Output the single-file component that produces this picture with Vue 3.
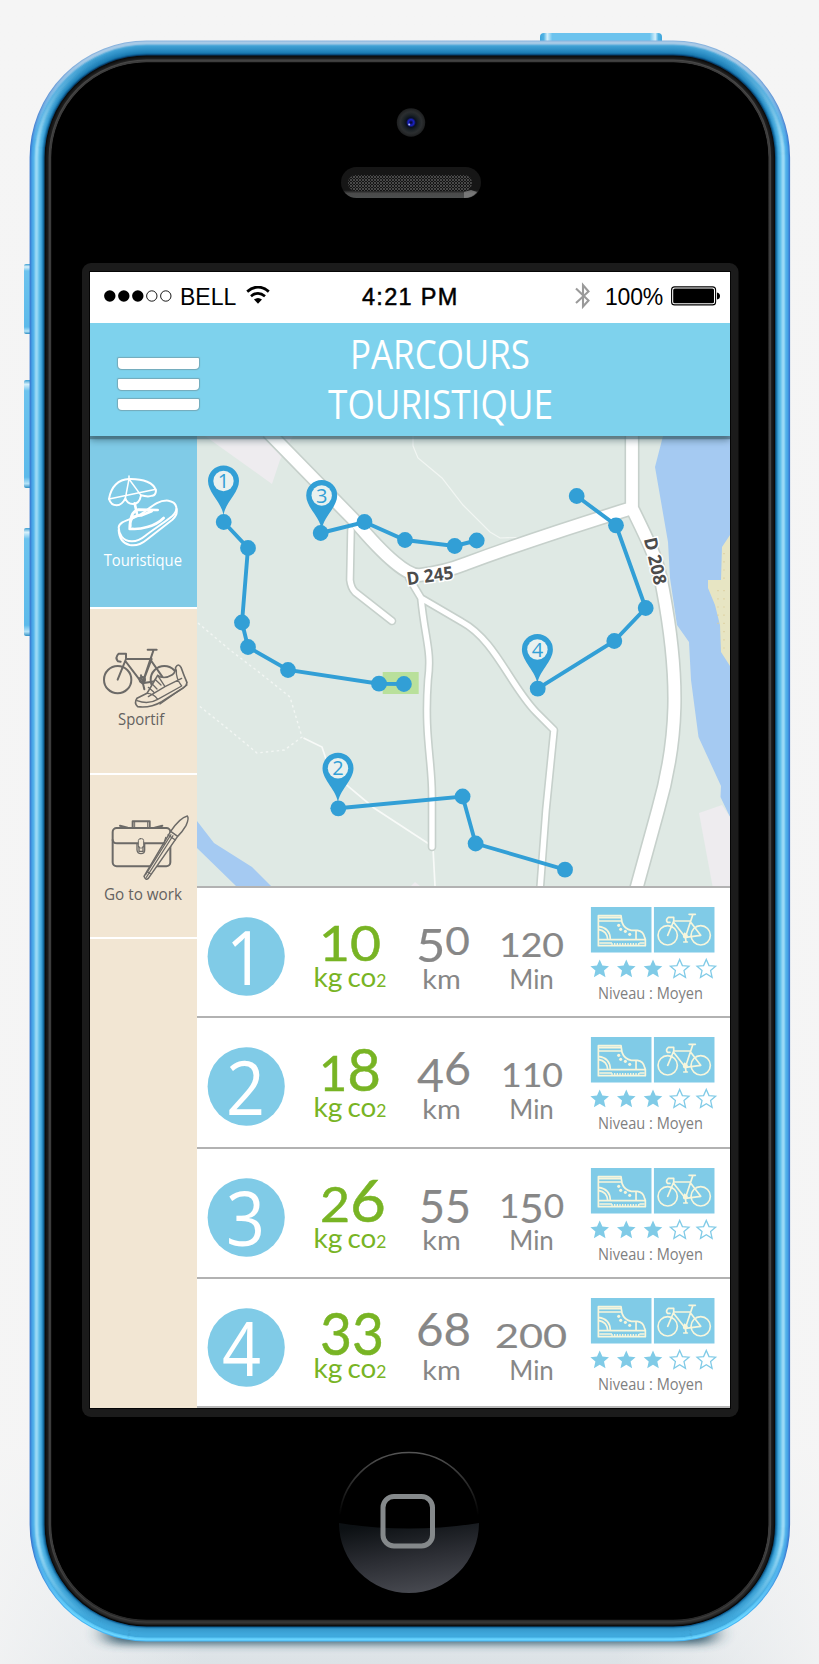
<script setup>
const side = ['#3a78d0', '#3f8fdc', '#47a3e6', '#4cade8', '#5cb8ec', '#84cef2', '#9adaf5', '#98d8f5', '#7fcdf0', '#62c0ea', '#52b4e4', '#46a9de', '#2f93c9', '#1a76ab', '#0b5583', '#0a0a0a', '#121212', '#181818', '#1c1c1c', '#444444', '#3c3c3c']
const top = ['#8ab4de', '#a6c8e6', '#aacbe6', '#98c4e4', '#62b0dc', '#40a1d4', '#3a9bd0', '#3596cb', '#3092c8', '#2b8cc3', '#2687be', '#2081b8', '#1a7ab0', '#10639a', '#063c68', '#0a0a0a', '#121212', '#181818', '#222222', '#484848', '#3c3c3c']
const bottom = ['#46b6f5', '#6cd6ff', '#66d2fd', '#58c4f4', '#3da8dd', '#3fa9dd', '#3fa9dd', '#3fa7db', '#3da5d9', '#3ba2d6', '#3a9fd2', '#389ccf', '#3496ca', '#2583b8', '#0e5f95', '#050505', '#161616', '#282828', '#303030', '#3c3c3c', '#2a2a2a']
const rings = side.map((s, i) => ({ s, t: top[i], b: bottom[i], i }))

const routes = [
  { n: '1', x: 223.5, y: 481, pts: [[223.7, 522], [248, 548], [242, 622.5], [248, 647], [288, 670], [379, 683.7], [403.9, 684]] },
  { n: '3', x: 321.7, y: 495.5, pts: [[320.7, 533], [364.5, 522], [405, 540], [454.7, 546], [476.7, 540.5]] },
  { n: '4', x: 537.4, y: 649.5, pts: [[537.7, 688.7], [614.3, 641], [645.7, 608], [616, 525.3], [576.7, 496]] },
  { n: '2', x: 338, y: 768.3, pts: [[338.3, 808.3], [462.6, 796.5], [475.6, 843.5], [565, 869.7]] }
]

// Old-style figures: 0-2 stay at x-height, 3 4 5 7 9 hang below the baseline, 6 and 8 rise.
function figures(str, size, drop = 0.13) {
  let prev = 0
  return [...str].map((d) => {
    const small = '012'.includes(d)
    const hang = '34579'.includes(d)
    const shift = hang ? size * drop : 0
    const dy = shift - prev
    prev = shift
    return { d, fs: size * (small ? 0.82 : 0.98), dy }
  })
}
const rows = [
  { n: '1', co: ['10', 122, 62], km: ['50', 219, 54], min: ['120', 302, 65] },
  { n: '2', co: ['18', 122, 62], km: ['46', 220, 54], min: ['110', 304, 62] },
  { n: '3', co: ['26', 123, 66], km: ['55', 222, 52], min: ['150', 302, 65] },
  { n: '4', co: ['33', 123, 64], km: ['68', 219, 55], min: ['200', 298, 72] }
].map((r) => ({
  ...r,
  cells: [
    { c: 'green', x: r.co[1], y: 73.8, w: r.co[2], f: figures(r.co[0], 60, 0.045) },
    { c: 'grey', x: r.km[1], y: 68.3, w: r.km[2], f: figures(r.km[0], 48) },
    { c: 'grey', x: r.min[1], y: 69.5, w: r.min[2], f: figures(r.min[0], 41) }
  ]
}))
const stars = [402.7, 429.3, 456, 482.7, 509.3]
const starPath = 'M0-9.6 2.7-3.4 9.3-2.8 4.3 1.6 5.8 8.3 0 4.8-5.8 8.3-4.3 1.6-9.3-2.8-2.7-3.4Z'
</script>

<template>
  <div class="stage">
    <svg class="device" width="819" height="1664" viewBox="0 0 819 1664">
      <defs>
        <linearGradient v-for="r in rings" :id="'ring' + r.i" :key="r.i" gradientUnits="userSpaceOnUse" x1="0" y1="41" x2="0" y2="1641">
          <stop offset="0" :stop-color="r.t" />
          <stop offset="0.012" :stop-color="r.t" />
          <stop offset="0.065" :stop-color="r.s" />
          <stop offset="0.94" :stop-color="r.s" />
          <stop offset="0.985" :stop-color="r.b" />
          <stop offset="1" :stop-color="r.b" />
        </linearGradient>
        <linearGradient id="key" x1="0" y1="0" x2="0" y2="1">
          <stop offset="0" stop-color="#3c9fd2" /><stop offset="0.04" stop-color="#d8f1fb" /><stop offset="0.1" stop-color="#6cc3ee" />
          <stop offset="0.9" stop-color="#5cbaea" /><stop offset="0.96" stop-color="#b5e3f8" /><stop offset="1" stop-color="#2d8fc4" />
        </linearGradient>
        <linearGradient id="power" x1="0" y1="0" x2="1" y2="0">
          <stop offset="0" stop-color="#3fa5da" /><stop offset="0.03" stop-color="#4fb2e4" /><stop offset="0.06" stop-color="#d4effb" /><stop offset="0.1" stop-color="#6cc3ee" />
          <stop offset="0.9" stop-color="#6cc3ee" /><stop offset="0.945" stop-color="#d4effb" /><stop offset="0.97" stop-color="#4fb2e4" /><stop offset="1" stop-color="#3fa5da" />
        </linearGradient>
        <linearGradient id="homeLow" x1="0.3" y1="0" x2="0.6" y2="1">
          <stop offset="0" stop-color="#0c1013" /><stop offset="0.5" stop-color="#2b2d33" /><stop offset="1" stop-color="#484a51" />
        </linearGradient>
        <linearGradient id="homeRim" x1="0" y1="0" x2="0" y2="1">
          <stop offset="0" stop-color="#555" /><stop offset="0.45" stop-color="#000" />
        </linearGradient>
        <linearGradient id="speaker" x1="0" y1="0" x2="0" y2="1">
          <stop offset="0" stop-color="#161616" /><stop offset="0.75" stop-color="#161616" /><stop offset="0.85" stop-color="#4a4a4a" /><stop offset="1" stop-color="#4d4f4f" />
        </linearGradient>
        <radialGradient id="lens">
          <stop offset="0" stop-color="#05051c" /><stop offset="0.2" stop-color="#1a22c8" /><stop offset="0.34" stop-color="#0a1020" />
          <stop offset="0.52" stop-color="#1a2125" /><stop offset="0.75" stop-color="#2b2e30" /><stop offset="1" stop-color="#1e1f20" />
        </radialGradient>
        <pattern id="mesh" width="3" height="3" patternUnits="userSpaceOnUse">
          <rect width="3" height="3" fill="#141414" />
          <path d="M-1 2 2-1M1 4 4 1M0 3 3 0" stroke="#565656" stroke-width="0.8" />
        </pattern>
        <filter id="soft" x="-20%" y="-200%" width="140%" height="500%"><feGaussianBlur stdDeviation="10 4" /></filter>
      </defs>
      <rect x="105" y="1622" width="610" height="22" rx="11" fill="#2b5366" opacity="0.9" filter="url(#soft)" />
      <path d="M540 42V37Q540 33 544 33H658Q662 33 662 37V42Z" fill="url(#power)" />
      <rect x="24" y="264" width="9" height="70" rx="2" fill="url(#key)" />
      <rect x="24" y="380" width="9" height="108" rx="2" fill="url(#key)" />
      <rect x="24" y="528" width="9" height="108" rx="2" fill="url(#key)" />
      <rect x="31" y="42" width="758" height="1598" rx="116" fill="#000" />
      <rect v-for="r in rings" :key="r.i" :x="30.5 + r.i" :y="41.5 + r.i" :width="758.7 - 2 * r.i" :height="1599 - 2 * r.i" :rx="116 - r.i" fill="none" :stroke="'url(#ring' + r.i + ')'" stroke-width="1.8" />
      <rect x="51.5" y="62.5" width="716.7" height="1557" rx="95" fill="#000" />
      <circle cx="411" cy="122.5" r="14.2" fill="url(#lens)" />
      <circle cx="409.2" cy="124.6" r="1" fill="#b8c4ff" />
      <rect x="341" y="167" width="140" height="31" rx="15.5" fill="url(#speaker)" />
      <path d="M464 192 471 190 477 192Q472 198 464 198Z" fill="#8a8a8a" opacity="0.7" />
      <rect x="348" y="175" width="124" height="16" rx="8" fill="url(#mesh)" />
      <rect x="82" y="263" width="656.5" height="1154" rx="9" fill="#1b1b1b" />
      <rect x="89" y="271" width="642" height="1138" fill="#050505" />
      <circle cx="409" cy="1522" r="69.5" fill="#000" stroke="url(#homeRim)" stroke-width="1.6" />
      <path d="M339 1523Q409 1534 479 1523A70 70 0 0 1 339 1523Z" fill="url(#homeLow)" />
      <rect x="383" y="1496.5" width="49.5" height="49.5" rx="11" fill="none" stroke="#85898b" stroke-width="5" />
    </svg>

    <main class="screen">
      <div class="status">
        <svg width="70" height="14" viewBox="0 0 70 14">
          <circle v-for="i in 5" :key="i" :cx="-7.2 + i * 14" cy="7" :r="i < 4 ? 5.7 : 5.2" :fill="i < 4 ? '#000' : 'none'" stroke="#000" :stroke-width="i < 4 ? 0 : 0.9" />
        </svg>
        <span class="carrier">BELL</span>
        <svg class="wifi" width="24" height="19" viewBox="0 0 24 19">
          <path d="M1.2 5.6Q12-3.4 22.8 5.6" fill="none" stroke="#000" stroke-width="2.8" />
          <path d="M5 10.2Q12 4.4 19 10.2" fill="none" stroke="#000" stroke-width="2.7" />
          <path d="M8 13.4Q12 10.4 16 13.4L12 17.8Z" />
        </svg>
        <span class="time">4:21 PM</span>
        <svg class="bt" width="16" height="28" viewBox="0 0 16 28">
          <path d="M1 6.5 13.5 18.5 8 24.5V3L13.5 9.5 1 21" fill="none" stroke="#9a9a9a" stroke-width="2.1" />
        </svg>
        <span class="charge">100%</span>
        <svg width="50" height="20" viewBox="0 0 50 20">
          <rect x="0.6" y="0.9" width="44" height="18" rx="3" fill="none" stroke="#000" stroke-width="1.1" />
          <rect x="2.2" y="2.5" width="40.8" height="14.8" rx="1.6" />
          <path d="M46 6.5Q49 7 49 10T46 13.5Z" />
        </svg>
      </div>

      <header class="bar">
        <div class="menu"><i></i><i></i><i></i></div>
        <svg class="title" width="240" height="113" viewBox="320 323 240 113">
          <text x="350" y="369" textLength="180" lengthAdjust="spacingAndGlyphs">PARCOURS</text>
          <text x="328" y="418.5" textLength="225" lengthAdjust="spacingAndGlyphs">TOURISTIQUE</text>
        </svg>
      </header>

      <div class="body">
        <nav class="side">
          <div class="tab active">
            <svg viewBox="15 -12 321 513" width="107" height="171">
              <g fill="none" stroke="#fff" stroke-width="6" stroke-linecap="round" stroke-linejoin="round">
                <path d="M72 177C78 140 100 118 132 117 175 116 207 128 213 152Q212 166 202 167 190 172 168 166 163 192 144 192 126 192 121 175 111 195 95 196 78 196 72 177Z" />
                <path d="M132 108V117L121 175M132 117 168 166M72 177 213 148" stroke-width="4.5" />
                <path d="M149 190 156 222" stroke-width="8" />
                <path d="M101 262C104 240 145 240 175 218 208 192 225 180 250 182 278 187 281 210 262 228 235 250 205 268 180 288 155 309 125 309 110 290Q101 277 101 262Z" />
                <path d="M101 270Q103 308 134 315 160 320 184 300L262 239Q278 225 275 207" />
                <path d="M134 267C135 235 140 214 160 209L218 210M134 266C165 270 210 260 236 234M136 258Q133 225 170 226L200 214" stroke-width="8" />
              </g>
              <text x="56" y="378" textLength="235" lengthAdjust="spacingAndGlyphs" fill="#fff">Touristique</text>
            </svg>
          </div>
          <div class="tab">
            <svg viewBox="15 507 321 492" width="107" height="164">
              <g fill="none" stroke="#6c6a67" stroke-width="6" stroke-linecap="round" stroke-linejoin="round">
                <circle cx="98" cy="719" r="41" /><circle cx="238" cy="719" r="41" />
                <path d="M98 719 123 657V641H101Q89 653 99 664L107 665M123 657H200L172 730 121 663M205 632 172 730 238 719 197 660M188 629H215" />
                <circle cx="172" cy="719" r="8" />
                <path d="M168 706 178 748" />
              </g>
              <g fill="#f2e6d3" stroke="#6c6a67" stroke-width="5" stroke-linecap="round" stroke-linejoin="round">
                <path d="M218 706Q235 720 262 704 272 698 272 682 280 668 288 682 296 705 306 728 303 742 285 750L230 785Q195 805 158 800 146 790 156 775L186 760Z" />
                <path d="M306 735 225 792M274 690Q272 715 290 738L218 778M156 782Q190 795 218 778M186 760Q206 760 218 778M218 706 240 740 190 770M190 742 206 756M200 730 216 747M210 718 228 735M240 740 290 715" fill="none" stroke-width="4" />
              </g>
              <text x="99" y="855" textLength="139" lengthAdjust="spacingAndGlyphs" fill="#64625f">Sportif</text>
            </svg>
          </div>
          <div class="tab">
            <svg viewBox="15 225 321 486" width="107" height="162">
              <g fill="none" stroke="#6c6a67" stroke-width="6" stroke-linejoin="round" stroke-linecap="round">
                <rect x="83" y="384" width="173" height="115" rx="12" />
                <path d="M83 420Q84 430 96 430H245Q256 430 256 418M143 383V364H194V383" />
                <path d="M105 377 128 383M232 377 209 383" />
                <path d="M149 367V383M188 367V383" stroke-width="3" />
                <rect x="160" y="416" width="16" height="28" rx="6" fill="#f2e6d3" stroke-width="3" />
                <path d="M156 432V450Q157 461 168 461T179 450V432M162 440V454H174V440" stroke-width="4" />
                <path d="M257 394 310 349Q312 372 278 409L190 537Q180 542 177 528Z" fill="#f2e6d3" stroke="none" />
                <path d="M257 394Q285 353 307 348 313 355 303 377 292 396 278 409M257 394 278 409 190 535Q182 542 177 529ZM249 405 271 420" stroke-width="4.5" />
                <path d="M264 407 184 532M258 404 182 524M242 412 236 434M186 514 196 521" stroke-width="3.5" />
              </g>
              <text x="57" y="600" textLength="234" lengthAdjust="spacingAndGlyphs" fill="#64625f">Go to work</text>
            </svg>
          </div>
        </nav>

        <section class="content">
          <svg class="map" viewBox="197 436 533 450" width="533" height="450">
            <rect x="197" y="436" width="533" height="450" fill="#dfe9e4" />
            <path d="M205 436H293L280 460 272 484Z" fill="#eeecef" />
            <path d="M663 436 655 467 668 542 670 578 677 625 689 642 691 680 698.5 737 721 786 720.5 797 730 817V436Z" fill="#a5caf2" />
            <path d="M730 535 722 547 721 580H708V588L715 605 720 625 721 652 730 666Z" fill="#e7e5c3" />
            <path d="M724 553V580M718 590V625M724 590V650" stroke="#dccb98" stroke-width="1.2" stroke-dasharray="1.2 7" />
            <path d="M699 813 722 805 730 817V886H712.5Z" fill="#eeecef" />
            <path d="M197 821 214 843 252 867 271 886H236L197 848Z" fill="#a5caf2" />
            <path d="M411 886 415 882 420 886Z" fill="#eeecef" />
            <rect x="382.7" y="672" width="36" height="22" fill="#b9e09b" />
            <g fill="none" stroke="#f2f6f3">
              <path d="M413 436V446L418 458 442 478 463 505 490 532 500 538 530 537" stroke-width="1.2" />
              <path d="M198 623 230 650 260 673 290 697 302 737 284.5 750 257 753 233 733 198 705" stroke-width="1.4" stroke-dasharray="2.5 3" />
              <path d="M303.5 738 322 747 327 762 346.5 785 374 808 429 844M433 848 435 886" stroke-width="1.7" stroke="#f8faf8" />
            </g>
            <g fill="none" stroke="#c6d0cb" stroke-linejoin="round">
              <path d="M268 432 355 521Q402 577 420 575 445 572 465 564 535 538 632 508M632 432V508C650 545 658 560 663 590 680 680 678 740 658 810L636 890" stroke-width="15" />
              <path d="M351 530 350 580Q351 588 355 592L392 621M409 578 421 598C425 640 432 650 428 680 424 735 432 760 432 795V847M412 583 421 598 462 622C495 640 510 685 536 712L554 730 546 810 540 890" stroke-width="8.6" stroke-linecap="round" />
            </g>
            <g fill="none" stroke="#fff" stroke-linejoin="round">
              <path d="M268 432 355 521Q402 577 420 575 445 572 465 564 535 538 632 508M632 432V508C650 545 658 560 663 590 680 680 678 740 658 810L636 890" stroke-width="11.8" />
              <path d="M351 530 350 580Q351 588 355 592L392 621M409 578 421 598C425 640 432 650 428 680 424 735 432 760 432 795V847M412 583 421 598 462 622C495 640 510 685 536 712L554 730 546 810 540 890" stroke-width="5.4" stroke-linecap="round" />
            </g>
            <g class="road">
              <text transform="translate(430 576) rotate(-8)" text-anchor="middle" y="6" textLength="47" lengthAdjust="spacingAndGlyphs">D 245</text>
              <text transform="translate(655 561) rotate(77)" text-anchor="middle" y="6" textLength="48" lengthAdjust="spacingAndGlyphs">D 208</text>
            </g>
            <g v-for="r in routes" :key="r.n" fill="#329fd6">
              <polyline :points="r.pts.map((p) => p.join(',')).join(' ')" fill="none" stroke="#329fd6" stroke-width="3.9" />
              <circle v-for="(p, i) in r.pts" :key="i" :cx="p[0]" :cy="p[1]" r="7.9" />
              <g :transform="`translate(${r.x} ${r.y})`">
                <path d="M0 35C-1 22-15.5 12-15.5 0A15.5 15.5 0 0 1 15.5 0C15.5 12 1 22 0 35Z" />
                <circle r="10.2" fill="#e9f1ef" />
                <text class="pin" text-anchor="middle" y="7">{{ r.n }}</text>
              </g>
            </g>
          </svg>

          <article v-for="r in rows" :key="r.n" class="row">
            <svg viewBox="0 1 533 128.5" width="533" height="128.5">
              <ellipse cx="49.2" cy="69.5" rx="38.6" ry="39.2" fill="#80cbe7" />
              <text class="num" :x="r.n === '4' ? 25 : 29" y="98" :textLength="39" lengthAdjust="spacingAndGlyphs">{{ r.n }}</text>
              <text v-for="(c, k) in r.cells" :key="k" class="ral" :class="c.c" :x="c.x" :y="c.y" :textLength="c.w" lengthAdjust="spacingAndGlyphs"><tspan v-for="(g, i) in c.f" :key="i" :font-size="g.fs" :dy="g.dy">{{ g.d }}</tspan></text>
              <text class="ral unit green" x="116.5" y="100.3" font-size="26" textLength="29" lengthAdjust="spacingAndGlyphs">kg</text>
              <text class="ral unit green" x="150.5" y="100.3" font-size="27" textLength="39" lengthAdjust="spacingAndGlyphs">co<tspan font-size="17">2</tspan></text>
              <text class="ral unit grey" x="225.3" y="101.6" font-size="26" textLength="38.5" lengthAdjust="spacingAndGlyphs">km</text>
              <text class="ral unit grey" x="312.3" y="101.6" font-size="26" textLength="44.5" lengthAdjust="spacingAndGlyphs">Min</text>

              <svg x="393.7" y="20" width="61" height="45.7" viewBox="92 66 183 137">
                <rect x="92" y="66" width="183" height="137" fill="#80cbe7" />
                <g fill="none" stroke="#f7f6dc" stroke-width="5" stroke-linejoin="round">
                  <path d="M115 92H183L186 112Q193 132 214 136H232Q250 138 254 158L256 163V182H115ZM115 108H184M115 98H183M115 164H256M228 137V163M115 124Q150 128 151 163M115 133Q142 138 143 163" />
                  <path d="M156 182V174M164 182V174M172 182V174M180 182V174M188 182V174M196 182V174M204 182V174M212 182V174M220 182V174M228 182V174M236 182V174M118 174H156M238 174H254" stroke-width="4" />
                </g>
                <g fill="#f7f6dc"><circle cx="176" cy="121" r="4.6" /><circle cx="182" cy="133" r="4.6" /><circle cx="196" cy="139" r="4.6" /><circle cx="209" cy="148" r="4.6" /></g>
              </svg>
              <svg x="456.7" y="20" width="61" height="45.7" viewBox="281 66 183 137">
                <rect x="281" y="66" width="183" height="137" fill="#80cbe7" />
                <g fill="none" stroke="#f7f6dc" stroke-width="5" stroke-linecap="round" stroke-linejoin="round">
                  <circle cx="323" cy="151" r="29" /><circle cx="422" cy="151" r="29" />
                  <path d="M323 151 341 108V97H325Q316 104 322 112H330M341 108H392L376 157 340 111M398 90 376 157 422 151 391 110M387 88H406M374 145 378 170M371 171H382" />
                  <circle cx="376" cy="153" r="5" />
                </g>
              </svg>
              <g v-for="(s, i) in stars" :key="s" :transform="`translate(${s} 82)`">
                <path :d="starPath" :fill="i < 3 ? '#80cbe7' : '#fff'" :stroke="i < 3 ? 'none' : '#80cbe7'" stroke-width="1.3" />
              </g>
              <text class="level" x="401" y="111.7" textLength="105" lengthAdjust="spacingAndGlyphs">Niveau : Moyen</text>
            </svg>
          </article>
        </section>
      </div>
    </main>
  </div>
</template>

<style>
html, body { margin: 0; }
</style>

<style scoped>
.stage {
  position: relative;
  box-sizing: border-box;
  width: 819px;
  height: 1664px;
  padding: 272px 89px 0 90px;
  overflow: hidden;
  background: linear-gradient(90deg, rgba(245, 245, 245, 0.8), rgba(245, 245, 245, 0) 25%, rgba(245, 245, 245, 0) 75%, rgba(245, 245, 245, 0.8)), linear-gradient(#f5f5f5 0, #f4f4f4 1450px, #dfe5e9 1640px, #dce2e6 1664px);
}
.device { position: absolute; left: 0; top: 0; }
.screen { position: relative; width: 640px; height: 1136px; overflow: hidden; background: #fff; display: flex; flex-direction: column; }
.status {
  height: 51px;
  flex: none;
  display: flex;
  align-items: center;
  box-sizing: border-box;
  padding: 0 9px 4px 13px;
  font: 23px/30px "Liberation Sans", Arial, sans-serif;
  color: #000;
}
.status svg { flex: none; }
.carrier { width: 57px; margin-left: 7px; padding-top: 2px; }
.wifi { margin-left: 9px; }
.time { width: 102px; margin-left: 92px; padding-top: 2px; font-size: 23.5px; letter-spacing: 1.3px; -webkit-text-stroke: 0.5px #000; white-space: nowrap; }
.bt { margin-left: 111px; }
.charge { margin-left: auto; margin-right: 8px; padding-top: 2px; letter-spacing: -0.2px; }
.bar {
  position: relative;
  z-index: 2;
  height: 113px;
  flex: none;
  display: flex;
  background: #7ed2ed;
  box-shadow: 0 3px 1px rgba(60, 95, 108, 0.55), 0 4px 7px rgba(30, 60, 70, 0.5);
  clip-path: inset(0 0 -20px 0);
}
.menu { display: flex; flex-direction: column; gap: 9.6px; width: 80.5px; margin: 35.2px 0 0 28px; }
.menu i { display: block; height: 11px; background: #fff; border-radius: 1px 1px 4px 4px; box-shadow: 0 0 1px 0.5px #75a9b8; }
.title { margin-left: 121.5px; overflow: visible; }
.title text { font: 39.5px "Open Sans", "Noto Sans", sans-serif; fill: #fff; }
.body { flex: 1; display: flex; min-height: 0; }
.side { width: 107px; flex: none; background: #f2e6d3; }
.tab { border-bottom: 2px solid #fff; }
.tab svg { display: block; }
.tab text { font: 49px "Open Sans", "Noto Sans", sans-serif; }
.active { background: #80cbe7; }
.content { width: 533px; display: flex; flex-direction: column; }
.map { display: block; flex: none; }
.row { border-top: 2px solid #b2b2b2; height: 128.25px; flex: none; overflow: hidden; }
.row:last-child { border-bottom: 2px solid #b8b8b8; height: 127px; }
.row svg { display: block; }
.road text { font: bold 18px "Open Sans", "Noto Sans", sans-serif; fill: #4c4c4c; stroke: #fff; stroke-width: 3px; paint-order: stroke; }
.pin { font: 20px "Open Sans", "Noto Sans", sans-serif; fill: #329fd6; }
.num { font: 75px "Open Sans", "Noto Sans", sans-serif; fill: #fff; }
.ral { font-family: Lato, "Open Sans", sans-serif; }
.green { fill: #78b424; stroke: #78b424; stroke-width: 0.5px; }
.grey { fill: #878787; stroke: #878787; stroke-width: 0.2px; }
.unit { stroke-width: 0; }
.level { font: 16.8px "Open Sans", "Noto Sans", sans-serif; fill: #7f7f7f; }
</style>
